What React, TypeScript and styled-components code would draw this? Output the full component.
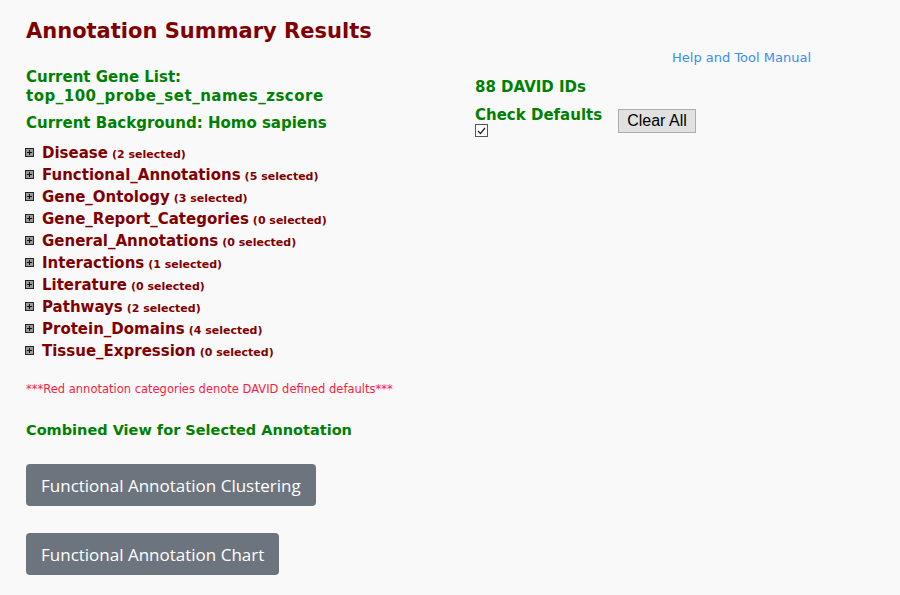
import React from "react";
import styled, { createGlobalStyle } from "styled-components";

const Global = createGlobalStyle`
  html, body { margin: 0; padding: 0; background: #f9f9f9; }
  body { font-family: "DejaVu Sans", Verdana, sans-serif; }
`;

const Page = styled.div`
  padding: 16px 26px 0 26px;
  width: 900px;
  box-sizing: border-box;
`;

const Title = styled.h1`
  margin: 0;
  font-size: 21px;
  line-height: 30px;
  font-weight: bold;
  color: #800000;
`;

const TopGrid = styled.div`
  display: grid;
  grid-template-columns: 449px 1fr;
  margin-top: 3px;
`;

const HelpRow = styled.div`
  grid-column: 1 / 3;
  display: flex;
  justify-content: flex-end;
  padding-right: 63px;
  height: 18px;
`;

const HelpLink = styled.a`
  font-size: 13px;
  color: #3b8ef0;
  text-decoration: none;
  line-height: 18px;
`;

const LeftCol = styled.div`
  display: flex;
  flex-direction: column;
  gap: 8px;
  padding-top: 1px;
`;

const RightCol = styled.div`
  display: flex;
  flex-direction: column;
  padding-top: 11px;
`;

const GreenLabel = styled.div`
  color: #008000;
  font-weight: bold;
  font-size: 15px;
  line-height: 19px;
`;

const LongName = styled.span`
  letter-spacing: 0.5px;
`;

const CheckRow = styled.div`
  display: flex;
  align-items: flex-start;
  gap: 16px;
  margin-top: 9px;
`;

const CheckBlock = styled.div`
  display: flex;
  flex-direction: column;
  line-height: 16px;
`;

const CheckLabel = styled.div`
  color: #008000;
  font-weight: bold;
  font-size: 15px;
  line-height: 18px;
`;

const CheckBox = styled.span`
  display: inline-flex;
  align-items: center;
  justify-content: center;
  width: 11px;
  height: 11px;
  border: 1px solid #555;
  background: #fff;
`;

const ClearButton = styled.button`
  margin-top: 3px;
  font-family: "Liberation Sans", Arial, sans-serif;
  font-size: 16px;
  padding: 1px 8px;
  height: 24px;
  background: #e1e1e1;
  border: 1px solid #adadad;
  color: #000;
  border-radius: 0;
`;

const Tree = styled.ul`
  list-style: none;
  margin: 4px 0 0 0;
  padding: 0;
`;

const TreeItem = styled.li`
  display: flex;
  align-items: center;
  height: 22px;
  gap: 8px;
`;

const PlusBox = styled.span`
  width: 9px;
  height: 9px;
  border: 1px solid #222;
  background: #9a9a9a;
  box-sizing: border-box;
  position: relative;
  flex: none;
  margin-left: -1px;
  margin-top: 1px;
  &::before, &::after {
    content: "";
    position: absolute;
    background: #111;
  }
  &::before { left: 1px; right: 1px; top: 3px; height: 1px; }
  &::after { top: 1px; bottom: 1px; left: 3px; width: 1px; }
`;

const CatName = styled.span`
  color: #800000;
  font-weight: bold;
  font-size: 15px;
`;

const CatCount = styled.span`
  color: #800000;
  font-weight: bold;
  font-size: 11px;
  margin-left: 4px;
`;

const Note = styled.div`
  margin-top: 20px;
  color: #ff1a40;
  font-size: 11.5px;
  line-height: 16px;
`;

const Combined = styled.div`
  margin-top: 23px;
  color: #008000;
  font-weight: bold;
  font-size: 14.5px;
  line-height: 20px;
`;

const Actions = styled.div`
  display: flex;
  flex-direction: column;
  align-items: flex-start;
  gap: 27px;
  margin-top: 24px;
`;

const ActionButton = styled.button`
  background: #6c757d;
  color: #fff;
  border: none;
  border-radius: 4px;
  height: 42px;
  padding: 0 15px;
  font-family: "Open Sans", "Noto Sans", sans-serif;
  font-size: 17px;
`;

const categories: [string, number][] = [
  ["Disease", 2],
  ["Functional_Annotations", 5],
  ["Gene_Ontology", 3],
  ["Gene_Report_Categories", 0],
  ["General_Annotations", 0],
  ["Interactions", 1],
  ["Literature", 0],
  ["Pathways", 2],
  ["Protein_Domains", 4],
  ["Tissue_Expression", 0],
];

export default function App() {
  return (
    <>
      <Global />
      <Page>
        <Title>Annotation Summary Results</Title>
        <TopGrid>
          <HelpRow>
            <HelpLink href="#">Help and Tool Manual</HelpLink>
          </HelpRow>
          <LeftCol>
            <GreenLabel>
              Current Gene List:
              <br />
              <LongName>top_100_probe_set_names_zscore</LongName>
            </GreenLabel>
            <GreenLabel>Current Background: Homo sapiens</GreenLabel>
          </LeftCol>
          <RightCol>
            <GreenLabel>88 DAVID IDs</GreenLabel>
            <CheckRow>
              <CheckBlock>
                <CheckLabel>Check Defaults</CheckLabel>
                <CheckBox>
                  <svg width="9" height="8" viewBox="0 0 9 8">
                    <path d="M1 4 L3.5 6.5 L8 1" fill="none" stroke="#222" strokeWidth="1.2" />
                  </svg>
                </CheckBox>
              </CheckBlock>
              <ClearButton>Clear All</ClearButton>
            </CheckRow>
          </RightCol>
        </TopGrid>
        <Tree>
          {categories.map(([name, n]) => (
            <TreeItem key={name}>
              <PlusBox />
              <span>
                <CatName>{name}</CatName>
                <CatCount>({n} selected)</CatCount>
              </span>
            </TreeItem>
          ))}
        </Tree>
        <Note>***Red annotation categories denote DAVID defined defaults***</Note>
        <Combined>Combined View for Selected Annotation</Combined>
        <Actions>
          <ActionButton>Functional Annotation Clustering</ActionButton>
          <ActionButton>Functional Annotation Chart</ActionButton>
        </Actions>
      </Page>
    </>
  );
}
